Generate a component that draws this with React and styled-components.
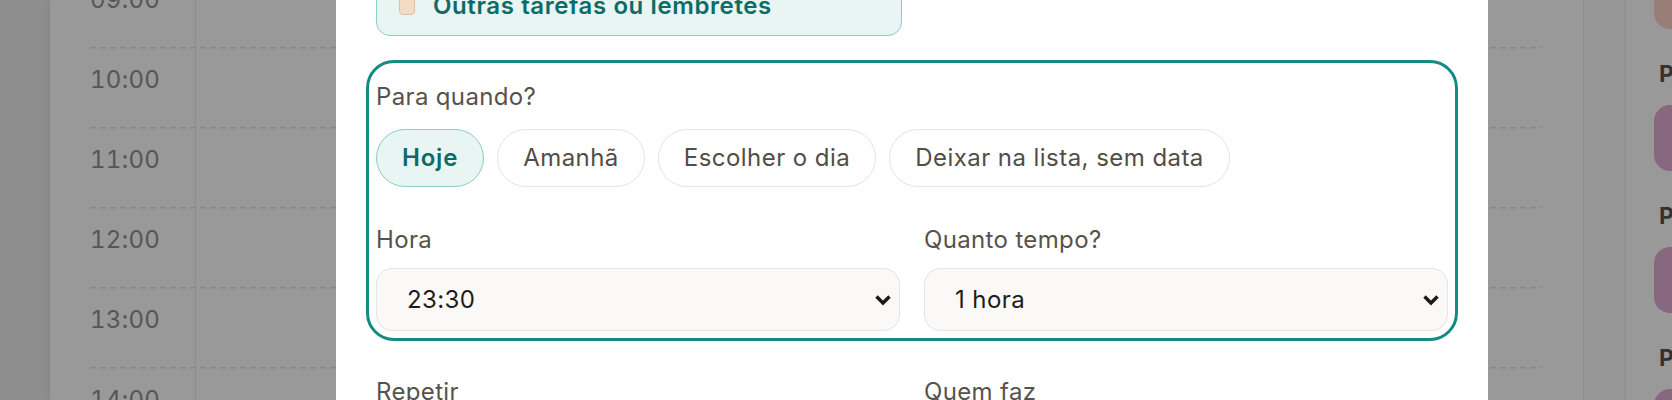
import React from "react";
import styled, { createGlobalStyle, css } from "styled-components";

const GlobalStyle = createGlobalStyle`
  html, body {
    margin: 0;
    padding: 0;
    overflow: hidden;
  }
  body {
    background: #fafafa;
    font-family: Inter, "Liberation Sans", sans-serif;
  }
  * {
    box-sizing: border-box;
  }
`;

const HOURS = ["09:00", "10:00", "11:00", "12:00", "13:00", "14:00"];

const PEOPLE = [
  { name: "Mãe", color: "#ffd2c6" },
  { name: "Pedro", color: "#e1aed4" },
  { name: "Paula", color: "#e1aed4" },
  { name: "Pietra", color: "#e1aed4" },
];

const WHEN = ["Hoje", "Amanhã", "Escolher o dia", "Deixar na lista, sem data"];

const App = () => {
  return (
    <>
      <GlobalStyle />
      <Page>
        <NavRail />
        <CalendarCard>
          <HourGrid>
            {HOURS.map((h) => (
              <HourRow key={h}>
                <HourLabel>{h}</HourLabel>
                <DayCell />
              </HourRow>
            ))}
          </HourGrid>
        </CalendarCard>
        <Gutter />
        <Sidebar>
          <PeopleList>
            {PEOPLE.map((p) => (
              <Person key={p.name}>
                <PersonName>{p.name}</PersonName>
                <PersonPill $color={p.color} />
              </Person>
            ))}
          </PeopleList>
        </Sidebar>
      </Page>
      <Backdrop />
      <Modal>
        <Form>
          <CategoryGrid>
            <CategoryOption $active>
              <Swatch $color="#f3dcc5" $border="#dcc1a4" />
              Outras tarefas ou lembretes
            </CategoryOption>
          </CategoryGrid>

          <Section $highlight>
            <FieldLabel>Para quando?</FieldLabel>
            <ChoiceRow>
              {WHEN.map((w, i) => (
                <Choice key={w} $active={i === 0}>
                  {w}
                </Choice>
              ))}
            </ChoiceRow>
            <FieldGrid $top={36}>
              <Field>
                <FieldLabel>Hora</FieldLabel>
                <SelectBox>
                  <Select defaultValue="23:30">
                    <option>23:00</option>
                    <option>23:30</option>
                  </Select>
                  <Chevron />
                </SelectBox>
              </Field>
              <Field>
                <FieldLabel>Quanto tempo?</FieldLabel>
                <SelectBox>
                  <Select defaultValue="1 hora">
                    <option>30 minutos</option>
                    <option>1 hora</option>
                    <option>2 horas</option>
                  </Select>
                  <Chevron />
                </SelectBox>
              </Field>
            </FieldGrid>
          </Section>

          <FieldGrid>
            <Field>
              <FieldLabel>Repetir</FieldLabel>
              <SelectBox>
                <Select defaultValue="Não repetir">
                  <option>Não repetir</option>
                </Select>
                <Chevron />
              </SelectBox>
            </Field>
            <Field>
              <FieldLabel>Quem faz</FieldLabel>
              <SelectBox>
                <Select defaultValue="Todos">
                  <option>Todos</option>
                </Select>
                <Chevron />
              </SelectBox>
            </Field>
          </FieldGrid>
        </Form>
      </Modal>
    </>
  );
};

const Chevron = () => (
  <ChevronIcon width="18" height="12" viewBox="0 0 18 12">
    <polyline
      points="2.5,2.5 9,9 15.5,2.5"
      fill="none"
      stroke="#1c1a18"
      strokeWidth="3.4"
      strokeLinejoin="miter"
    />
  </ChevronIcon>
);

/* ---------- background page (dimmed by the backdrop) ---------- */

const Page = styled.div`
  display: flex;
  height: 100vh;
  width: 1900px;
`;

const NavRail = styled.div`
  flex: none;
  width: 50px;
  background: #ededed;
`;

const CalendarCard = styled.div`
  flex: none;
  width: 1533px;
  height: 100%;
  background: #fff;
  padding: 0 41px 0 40px;
  box-shadow: -2px 0 6px rgba(0, 0, 0, 0.06);
  overflow: hidden;
`;

const HourGrid = styled.div`
  margin-top: -33px;
`;

const HourRow = styled.div`
  display: grid;
  grid-template-columns: 105px 1fr;
  height: 80px;
  background: repeating-linear-gradient(to right, #e2e0dc 0 6px, transparent 6px 10px)
    top left / 100% 1.5px no-repeat;
`;

const HourLabel = styled.div`
  padding: 18px 0 0 0;
  font-size: 24px;
  line-height: 30px;
  letter-spacing: 0.3px;
  color: #948f88;
  font-variant-numeric: tabular-nums;
`;

const DayCell = styled.div`
  border-left: 1.5px solid #e8e8e8;
`;

const Gutter = styled.div`
  flex: none;
  width: 42px;
  border-left: 1.5px solid #ececec;
`;

const Sidebar = styled.aside`
  flex: none;
  width: 320px;
  height: 100%;
  background: #fff;
  border-left: 1.5px solid #ececec;
  padding-left: 28px;
  overflow: hidden;
`;

const PeopleList = styled.div`
  margin-top: -85px;
  display: flex;
  flex-direction: column;
  gap: 28px;
`;

const Person = styled.div`
  display: flex;
  flex-direction: column;
  gap: 14px;
`;

const PersonName = styled.div`
  padding-left: 5px;
  font-size: 23px;
  font-weight: 700;
  line-height: 34px;
  color: #58534d;
`;

const PersonPill = styled.div`
  height: 66px;
  border-radius: 16px;
  background: ${(p) => p.$color};
`;

const Backdrop = styled.div`
  position: fixed;
  inset: 0;
  background: rgba(0, 0, 0, 0.4);
  z-index: 10;
`;

/* ---------- modal ---------- */

const Modal = styled.div`
  position: fixed;
  top: 0;
  bottom: 0;
  left: 336px;
  width: 1152px;
  z-index: 20;
  background: #fff;
  padding: 0 40px;
  overflow: hidden;
`;

const Form = styled.div`
  margin-top: -24px;
  display: flex;
  flex-direction: column;
  gap: 44px;
`;

const CategoryGrid = styled.div`
  display: grid;
  grid-template-columns: 1fr 1fr;
  gap: 20px;
`;

const CategoryOption = styled.label`
  display: flex;
  align-items: center;
  gap: 18px;
  padding: 12px 22px;
  border: 1.5px solid ${(p) => (p.$active ? "#8dcdc7" : "#e7e3de")};
  background: ${(p) => (p.$active ? "#e8f5f3" : "#fff")};
  border-radius: 14px;
  font-size: 24px;
  font-weight: 600;
  letter-spacing: 0.6px;
  line-height: 34px;
  color: #0e6b65;
`;

const Swatch = styled.span`
  flex: none;
  width: 16px;
  height: 18px;
  border-radius: 4px;
  background: ${(p) => p.$color};
  border: 1.5px solid ${(p) => p.$border};
`;

const Section = styled.section`
  display: flex;
  flex-direction: column;
  ${(p) =>
    p.$highlight &&
    css`
      margin: -20px -10px -10px;
      padding: 17px 7px 7px;
      border: 3px solid #138a82;
      border-radius: 28px;
    `}
`;

const FieldLabel = styled.div`
  font-size: 24px;
  font-weight: 400;
  letter-spacing: 0.35px;
  line-height: 34px;
  color: #57524c;
  margin-bottom: 11px;

  ${Section} > & {
    margin-bottom: 15px;
  }
`;

const ChoiceRow = styled.div`
  display: flex;
  flex-wrap: wrap;
  gap: 13px;
`;

const Choice = styled.button`
  padding: 10px 25px;
  border-radius: 999px;
  border: 1.5px solid ${(p) => (p.$active ? "#8dcdc7" : "#e7e3de")};
  background: ${(p) => (p.$active ? "#e8f5f3" : "#fff")};
  color: ${(p) => (p.$active ? "#0e6b65" : "#524d48")};
  font-family: inherit;
  font-size: 24px;
  font-weight: ${(p) => (p.$active ? 600 : 400)};
  letter-spacing: ${(p) => (p.$active ? "0.8px" : "0.45px")};
  line-height: 36px;
  cursor: pointer;
`;

const FieldGrid = styled.div`
  display: grid;
  grid-template-columns: 1fr 1fr;
  gap: 24px;
  margin-top: ${(p) => p.$top || 0}px;
`;

const Field = styled.div`
  display: flex;
  flex-direction: column;
`;

const SelectBox = styled.div`
  position: relative;
`;

const Select = styled.select`
  appearance: none;
  width: 100%;
  height: 63px;
  padding: 0 60px 0 30px;
  border: 1.5px solid #e7e3de;
  border-radius: 16px;
  background: #faf9f7;
  font-family: inherit;
  font-size: 24px;
  letter-spacing: 0.4px;
  color: #1e1b18;
  outline: none;
`;

const ChevronIcon = styled.svg`
  position: absolute;
  right: 8px;
  top: 50%;
  transform: translateY(-50%);
  pointer-events: none;
`;

export default App;
